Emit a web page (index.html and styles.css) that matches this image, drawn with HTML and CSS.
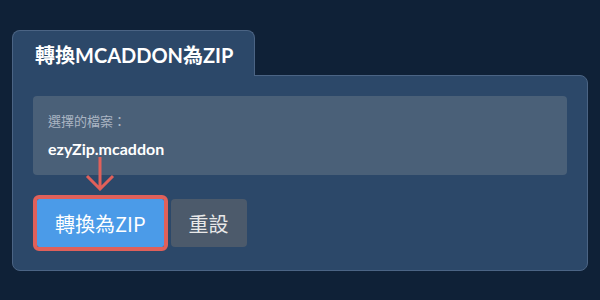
FILE: index.html
```html
<!DOCTYPE html>
<html lang="zh-Hant">
<head>
    <meta charset="UTF-8">
    <meta name="viewport" content="width=device-width, initial-scale=1.0">
    <title>轉換MCADDON為ZIP</title>
    <link rel="stylesheet" href="styles.css">
</head>
<body>

    <div class="panel">
        <div class="tab">轉換MCADDON為ZIP</div>
        <div class="card">
            <div class="file-box">
                <p class="file-label">選擇的檔案：</p>
                <p class="file-name">ezyZip.mcaddon</p>
            </div>
            <div class="actions">
                <div class="convert-wrap">
                    <svg class="arrow" width="30" height="34" viewBox="0 0 30 34">
                        <path d="M15 0 V32 M2 19 L15 32 L28 19" fill="none" stroke="#e0605a" stroke-width="3"/>
                    </svg>
                    <button class="button convert">轉換為ZIP</button>
                </div>
                <button class="button reset">重設</button>
            </div>
        </div>
    </div>

</body>
</html>
```

FILE: styles.css
```css
body {
    margin: 0;
    padding: 30px 12px 0 12px;
    background: #0f2137;
    font-family: Lato, "Noto Sans CJK TC", sans-serif;
    color: #fff;
}

.panel {
    display: flex;
    flex-direction: column;
    align-items: flex-start;
}

.tab {
    position: relative;
    z-index: 1;
    width: 198px;
    height: 45px;
    margin-bottom: -1px;
    padding: 0 21px 0 22px;
    background: #2c4869;
    border: 1px solid #4b6484;
    border-bottom: none;
    border-radius: 8px 8px 0 0;
    font-size: 20px;
    font-weight: bold;
    line-height: 48px;
    white-space: nowrap;
}

.card {
    align-self: stretch;
    background: #2c4869;
    border: 1px solid #4b6484;
    border-radius: 0 8px 8px 8px;
    padding: 20px 20px 23px 20px;
}

.file-box {
    background: #4a6078;
    border-radius: 4px;
    padding: 15px 15px 16px 15px;
}

.file-label {
    margin: 0;
    font-family: "Noto Sans CJK TC", sans-serif;
    font-size: 13px;
    line-height: 20px;
    color: #aab5c3;
}

.file-name {
    margin: 8px 0 0 0;
    font-size: 16px;
    font-weight: bold;
    line-height: 20px;
}

.actions {
    display: flex;
    gap: 7px;
    margin-top: 24px;
    padding-left: 4px;
}

.convert-wrap {
    position: relative;
    display: flex;
}

.arrow {
    position: absolute;
    left: 50%;
    bottom: calc(100% + 8px);
    margin-left: -15px;
}

.button {
    height: 48px;
    padding: 0 18px;
    border: none;
    border-radius: 4px;
    font-family: "Noto Sans CJK TC", sans-serif;
    font-size: 20px;
    cursor: pointer;
}

.convert {
    background: #4b9be8;
    color: #fff;
    outline: 4px solid #e0605a;
    border-radius: 2px;
}

.reset {
    background: #4c5a6b;
    color: #e8e8e8;
}
```
